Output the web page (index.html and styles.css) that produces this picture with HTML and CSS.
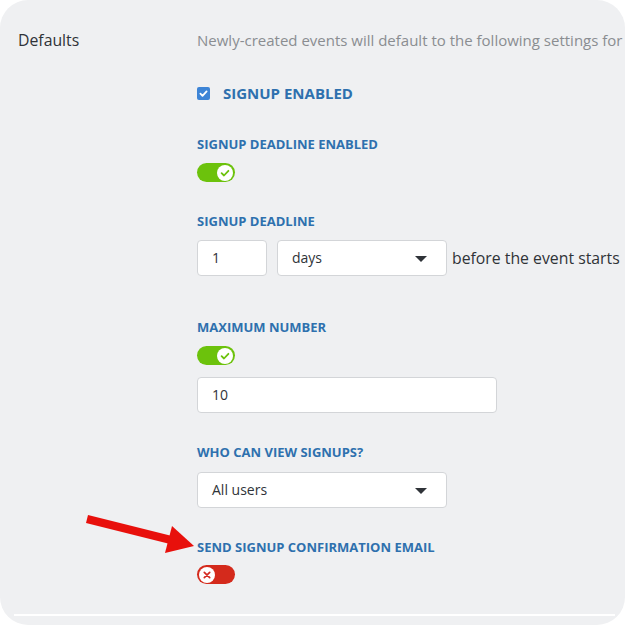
FILE: index.html
```html
<!DOCTYPE html>
<html>
<head>
<meta charset="utf-8">
<link rel="stylesheet" href="styles.css">
</head>
<body>
<div class="panel">
  <div class="row">
    <div class="side">Defaults</div>
    <div class="main">
      <div class="desc">Newly-created events will default to the following settings for</div>

      <div class="check-row">
        <span class="checkbox">
          <svg width="13" height="13" viewBox="0 0 13 13"><path d="M3.4 6.7 L5.5 8.8 L9.6 4.4" fill="none" stroke="#fff" stroke-width="1.8" stroke-linecap="round" stroke-linejoin="round"/></svg>
        </span>
        <span class="check-label">SIGNUP ENABLED</span>
      </div>

      <div class="label l1">SIGNUP DEADLINE ENABLED</div>
      <div class="toggle on">
        <span class="knob"><svg width="16" height="16" viewBox="0 0 16 16"><path d="M4.6 8.2 L7 10.5 L11.4 5.8" fill="none" stroke="#6cc20c" stroke-width="1.8" stroke-linecap="round" stroke-linejoin="round"/></svg></span>
      </div>

      <div class="label l2">SIGNUP DEADLINE</div>
      <div class="inputs">
        <div class="field small">1</div>
        <div class="field select">days<span class="caret"></span></div>
        <span class="after">before the event starts</span>
      </div>

      <div class="label l3">MAXIMUM NUMBER</div>
      <div class="toggle on">
        <span class="knob"><svg width="16" height="16" viewBox="0 0 16 16"><path d="M4.6 8.2 L7 10.5 L11.4 5.8" fill="none" stroke="#6cc20c" stroke-width="1.8" stroke-linecap="round" stroke-linejoin="round"/></svg></span>
      </div>
      <div class="field wide">10</div>

      <div class="label l4">WHO CAN VIEW SIGNUPS?</div>
      <div class="field select">All users<span class="caret"></span></div>

      <div class="label l5">SEND SIGNUP CONFIRMATION EMAIL</div>
      <div class="toggle off">
        <span class="knob"><svg width="16" height="16" viewBox="0 0 16 16"><path d="M5.3 5.3 L10.7 10.7 M10.7 5.3 L5.3 10.7" fill="none" stroke="#d42a22" stroke-width="1.7" stroke-linecap="round"/></svg></span>
      </div>
    </div>
  </div>
  <div class="rule"></div>

  <svg class="arrow" width="125" height="55" viewBox="0 0 125 55">
    <line x1="12" y1="14" x2="96" y2="35" stroke="#e8100c" stroke-width="8.5"/>
    <polygon points="97,21 119,41 90,48" fill="#e8100c"/>
  </svg>
</div>
</body>
</html>
```

FILE: styles.css
```css
html, body {
  margin: 0;
  padding: 0;
  background: #ffffff;
}

body {
  width: 625px;
  height: 625px;
  overflow: hidden;
  font-family: "Open Sans", "Liberation Sans", sans-serif;
}

.panel {
  position: relative;
  width: 625px;
  height: 625px;
  box-sizing: border-box;
  background: #eff0f2;
  border-radius: 28px;
  padding-top: 29px;
}

.row {
  display: flex;
}

.side {
  width: 179px;
  padding-left: 18px;
  font-size: 15.8px;
  line-height: 22px;
  color: #2f3338;
}

.main {
  flex: 1;
  display: flex;
  flex-direction: column;
  align-items: flex-start;
}

.desc {
  font-size: 15px;
  line-height: 22px;
  color: #8a8d91;
  white-space: nowrap;
}

.check-row {
  margin-top: 32px;
  display: flex;
  align-items: center;
  height: 20px;
}

.checkbox {
  width: 13px;
  height: 13px;
  border-radius: 2px;
  background: #3d84d6;
  display: flex;
}

.check-label {
  margin-left: 13px;
  font-size: 15px;
  font-weight: 700;
  color: #2e70ae;
  line-height: 20px;
}

.label {
  font-size: 13px;
  font-weight: 700;
  color: #2e70ae;
  line-height: 16px;
  margin-top: 31px;
  margin-bottom: 11px;
}

.l1 { margin-top: 33px; }
.l3 { margin-top: 43px; }
.l4 { margin-top: 31px; margin-bottom: 12px; }
.l5 { margin-bottom: 10px; }

.toggle {
  width: 38px;
  height: 19px;
  border-radius: 10px;
  box-sizing: border-box;
  padding: 1.5px 2px;
  display: flex;
}

.toggle.on {
  background: #6cc20c;
  justify-content: flex-end;
}

.toggle.off {
  background: #d42a1c;
  justify-content: flex-start;
}

.knob {
  width: 16px;
  height: 16px;
  border-radius: 50%;
  background: #ffffff;
  display: flex;
}

.inputs {
  display: flex;
  align-items: center;
}

.field {
  box-sizing: border-box;
  height: 36px;
  background: #ffffff;
  border: 1px solid #d3d5d8;
  border-radius: 4px;
  padding-left: 14px;
  font-size: 14px;
  line-height: 34px;
  color: #2f3338;
  position: relative;
}

.field.small {
  width: 70px;
}

.field.select {
  width: 250px;
}

.inputs .field.select {
  width: 170px;
  margin-left: 10px;
}

.field.wide {
  width: 300px;
  margin-top: 12px;
}

.caret {
  position: absolute;
  right: 19px;
  top: 15px;
  width: 0;
  height: 0;
  border-left: 6px solid transparent;
  border-right: 6px solid transparent;
  border-top: 6px solid #2f3338;
}

.after {
  margin-left: 5px;
  font-size: 15.8px;
  color: #2f3338;
  white-space: nowrap;
}

.rule {
  position: absolute;
  left: 14px;
  right: 10px;
  top: 614px;
  height: 2px;
  background: #ffffff;
}

.arrow {
  position: absolute;
  left: 75px;
  top: 505px;
}
```
